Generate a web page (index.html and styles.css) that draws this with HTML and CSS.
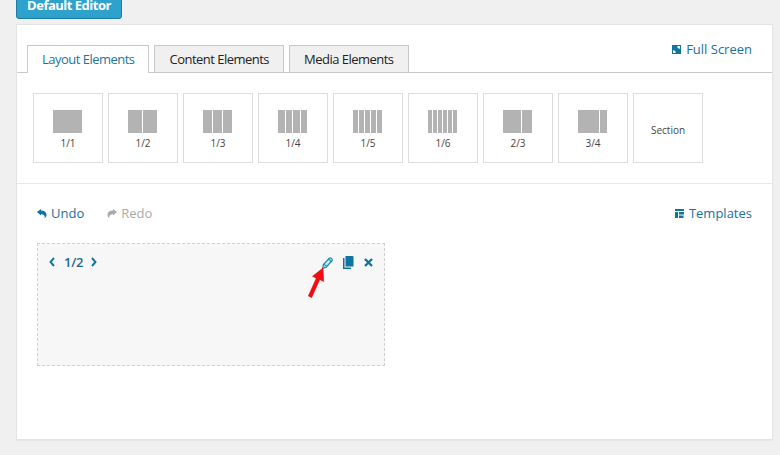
FILE: index.html
```html
<!DOCTYPE html>
<html lang="en">
<head>
<meta charset="utf-8">
<title>Layout Editor</title>
<link rel="stylesheet" href="styles.css">
</head>
<body>
<button class="editor-button">Default Editor</button>
<main class="panel">
  <header class="panel-head">
    <nav class="tabs">
      <a class="tab active">Layout Elements</a>
      <a class="tab">Content Elements</a>
      <a class="tab">Media Elements</a>
    </nav>
    <a class="link fullscreen">
      <svg width="9" height="9" viewBox="0 0 9 9"><path fill="currentColor" d="M0 0h9v9H0z"/><path fill="#fff" d="M5 1h3v3L7 3.200 6.300 3.600 5.400 2.700 5.800 2zM1 5l1 .8.700-.4.900.9-.4.700L4 8H1z"/></svg>
      <span>Full Screen</span>
    </a>
  </header>
  <section class="cards">
    <div class="card"><div class="cols"><i></i></div><span>1/1</span></div>
    <div class="card"><div class="cols"><i></i><i></i></div><span>1/2</span></div>
    <div class="card"><div class="cols"><i></i><i></i><i></i></div><span>1/3</span></div>
    <div class="card"><div class="cols"><i></i><i></i><i></i><i></i></div><span>1/4</span></div>
    <div class="card"><div class="cols"><i></i><i></i><i></i><i></i><i></i></div><span>1/5</span></div>
    <div class="card"><div class="cols"><i></i><i></i><i></i><i></i><i></i><i></i></div><span>1/6</span></div>
    <div class="card"><div class="cols"><i class="double"></i><i></i></div><span>2/3</span></div>
    <div class="card"><div class="cols"><i class="triple"></i><i></i></div><span>3/4</span></div>
    <div class="card"><span>Section</span></div>
  </section>
  <div class="toolbar">
    <a class="link undo">
      <svg width="10" height="9" viewBox="0 0 10 9"><path fill="currentColor" d="M0 3L4 0v1.500c3.500 0 5.500 1.600 5.500 4.400 0 1.300-.6 2.400-1.900 3.100.6-2.400-.6-3.700-3.600-3.700v1.300z"/></svg>
      <span>Undo</span>
    </a>
    <a class="link redo">
      <svg width="10" height="9" viewBox="0 0 10 9"><path fill="currentColor" d="M10 3L6 0v1.500C2.500 1.500.5 3.100.5 5.900c0 1.300.6 2.400 1.900 3.100-.6-2.400.6-3.700 3.600-3.700v1.300z"/></svg>
      <span>Redo</span>
    </a>
    <a class="link templates">
      <svg width="9" height="9" viewBox="0 0 9 9"><path fill="currentColor" d="M0 0h9v2H0zM0 3h3v6H0zM4 3h5v2.500H4zM4 6.500h4.500V9H4z"/></svg>
      <span>Templates</span>
    </a>
  </div>
  <section class="block">
    <svg width="6" height="10" viewBox="0 0 6 10"><path d="M5 1L1.500 5 5 9" fill="none" stroke="currentColor" stroke-width="1.900"/></svg>
    <b>1/2</b>
    <svg width="6" height="10" viewBox="0 0 6 10"><path d="M1 1l3.500 4L1 9" fill="none" stroke="currentColor" stroke-width="1.900"/></svg>
    <div class="actions">
      <svg width="11" height="12" viewBox="0 0 11 12"><path d="M.6 11.300l.8-3.800L7.200 1.200Q8.300.3 9.500 1.400T10 4L4.200 10.200z" fill="#a9dcea" stroke="#2389af" stroke-width="1.200"/><path d="M2.300 7.200l2.100 2M6.500 2.200l2.600 2.400" stroke="#167da5" stroke-width="1.100"/><path d="M3.700 7.600l3.800-4" stroke="#fff"/></svg>
      <svg width="11" height="13" viewBox="0 0 11 13"><path fill="currentColor" d="M2.500 0h7q1 0 1 1v9.500h-8zM0 2h1.500v9.500H8V13H0z"/></svg>
      <svg width="9" height="9" viewBox="0 0 9 9"><path d="M1 1l7 7M8 1L1 8" stroke="currentColor" stroke-width="2.400"/></svg>
    </div>
    <svg class="pointer" width="20" height="32" viewBox="0 0 20 32"><path fill="#f20d12" stroke="#d90000" stroke-width=".5" d="M16 1L16.700 14.500 12.800 12.500 4.700 30.500 1.300 29 9.300 11.200 5.500 9.300z"/></svg>
  </section>
</main>
</body>
</html>
```

FILE: styles.css
```css
* { box-sizing: border-box; }
body {
  margin: 0;
  height: 455px;
  overflow: hidden;
  background: #f0f0f0;
  font: 13px/18px "Open Sans", sans-serif;
  color: #222;
}
svg { display: block; flex: none; }
.editor-button {
  display: block;
  width: 106px;
  height: 28px;
  margin: -9px 0 5px 16px;
  padding: 0;
  border: 1px solid #1b7aa6;
  border-radius: 3px;
  background: #2ea2cc;
  box-shadow: inset 0 1px 0 #78c8e6;
  color: #fff;
  font: 700 13px/26px "Open Sans", sans-serif;
  letter-spacing: -.5px;
}
.panel {
  width: 757px;
  height: 416px;
  margin-left: 16px;
  border: 1px solid #e3e3e3;
  background: #fff;
  box-shadow: 0 1px 1px rgba(0, 0, 0, .04);
}
.panel-head {
  display: flex;
  justify-content: space-between;
  height: 48px;
  padding: 20px 20px 0 10px;
  border-bottom: 1px solid #c8c8c8;
}
.tabs { display: flex; gap: 5px; }
.tab {
  height: 27px;
  padding: 4px 14px 0;
  border: 1px solid #c8c8c8;
  border-bottom: 0;
  background: #f0f0f0;
  letter-spacing: -.52px;
  white-space: nowrap;
}
.tab.active { height: 28px; background: #fff; color: #21759b; }
.link { display: flex; align-items: center; gap: 5px; height: 18px; color: #20709a; }
.link svg { color: #0f74a0; }
.fullscreen { margin-top: -5px; }
.cards {
  display: flex;
  gap: 5px;
  height: 111px;
  padding: 20px 16px 0;
  border-bottom: 1px solid #e8e8e8;
}
.card {
  display: flex;
  flex-direction: column;
  align-items: center;
  justify-content: center;
  gap: 3px;
  width: 70px;
  height: 70px;
  padding-top: 3px;
  border: 1px solid #ddd;
  font-size: 10px;
  line-height: 14px;
  color: #444;
}
.cols { display: flex; gap: 1px; width: 29px; height: 23px; margin-right: 1px; }
.cols i { flex: 1; background: #b3b3b3; }
.cols .double { flex: 1.8; }
.cols .triple { flex: 2.9; }
.toolbar { display: flex; gap: 23px; height: 59px; padding: 20px 20px 0; }
.undo, .redo { gap: 4px; }
.redo, .redo svg { color: #aaa; }
.templates { margin-left: auto; }
.block {
  position: relative;
  display: flex;
  align-items: flex-start;
  gap: 9px;
  width: 348px;
  height: 123px;
  margin-left: 20px;
  padding: 13px 11px 0;
  border: 1px dashed #d0d0d0;
  background: #f7f7f7;
  color: #0f74a0;
}
.block b { margin: -4px -1px 0 0; font-weight: 600; letter-spacing: -.3px; color: #23698f; }
.actions { display: flex; align-items: center; gap: 10px; margin: -1px 0 0 auto; }
.pointer { position: absolute; left: 269px; top: 23px; }
```
